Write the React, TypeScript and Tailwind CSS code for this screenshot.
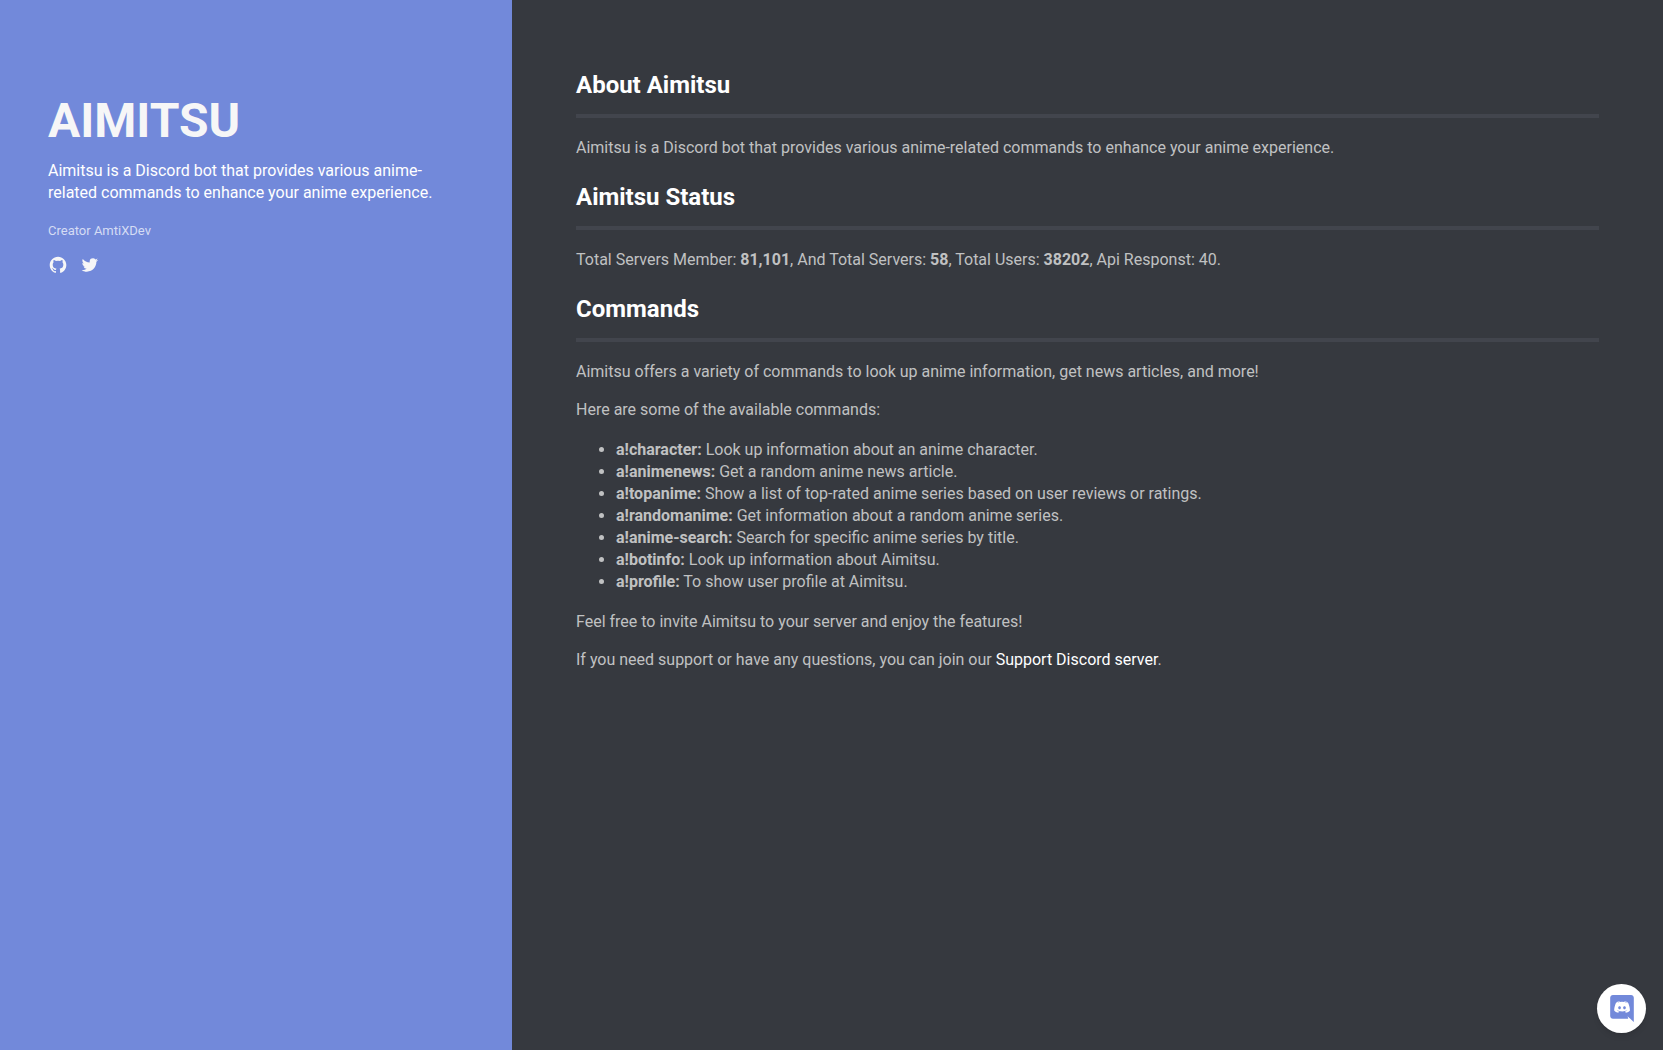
import React from "react";
import { BiLogoGithub, BiLogoTwitter } from "react-icons/bi";

const commands = [
  ["a!character:", "Look up information about an anime character."],
  ["a!animenews:", "Get a random anime news article."],
  ["a!topanime:", "Show a list of top-rated anime series based on user reviews or ratings."],
  ["a!randomanime:", "Get information about a random anime series."],
  ["a!anime-search:", "Search for specific anime series by title."],
  ["a!botinfo:", "Look up information about Aimitsu."],
  ["a!profile:", "To show user profile at Aimitsu."],
];

function Section({ title, children }: { title: string; children: React.ReactNode }) {
  return (
    <section>
      <h2 className="border-b-4 border-[#42454d] pb-[13px] text-2xl leading-8 font-bold text-white">{title}</h2>
      <div className="flex flex-col gap-4 pt-[19px] pb-[22px]">{children}</div>
    </section>
  );
}

export default function App() {
  return (
    <div className="flex min-h-screen bg-[#36393f] font-['Roboto',sans-serif] text-base leading-[22px] text-[#c0c1c2]">
      <aside className="w-[512px] shrink-0 bg-[#7289da] px-12 pt-[89px] text-[#f6f6f7]">
        <h1 className="text-5xl leading-[64px] font-bold">AIMITSU</h1>
        <p className="mt-[7px] leading-[22px] text-white">
          Aimitsu is a Discord bot that provides various anime-related commands to enhance your anime experience.
        </p>
        <p className="mt-4 text-[13px] text-[#d5dcf4]">Creator AmtiXDev</p>
        <nav className="mt-[13px] flex gap-3">
          <a href="#github" aria-label="GitHub">
            <BiLogoGithub className="size-5" />
          </a>
          <a href="#twitter" aria-label="Twitter">
            <BiLogoTwitter className="size-5" />
          </a>
        </nav>
      </aside>

      <main className="flex-1 px-16 pt-[69px]">
        <Section title="About Aimitsu">
          <p>Aimitsu is a Discord bot that provides various anime-related commands to enhance your anime experience.</p>
        </Section>
        <Section title="Aimitsu Status">
          <p>
            Total Servers Member: <strong>81,101</strong>, And Total Servers: <strong>58</strong>, Total Users:{" "}
            <strong>38202</strong>, Api Responst: 40.
          </p>
        </Section>
        <Section title="Commands">
          <p>Aimitsu offers a variety of commands to look up anime information, get news articles, and more!</p>
          <p>Here are some of the available commands:</p>
          <ul className="my-0.5 list-disc pl-10">
            {commands.map(([name, text]) => (
              <li key={name}>
                <strong>{name}</strong> {text}
              </li>
            ))}
          </ul>
          <p>Feel free to invite Aimitsu to your server and enjoy the features!</p>
          <p>
            If you need support or have any questions, you can join our{" "}
            <a href="#support" className="text-white">
              Support Discord server
            </a>
            .
          </p>
        </Section>
      </main>

      <button
        type="button"
        aria-label="Open Discord chat"
        className="fixed right-[17px] bottom-[17px] flex size-[49px] items-center justify-center rounded-full bg-white text-[#7289da] shadow-md"
      >
        <svg viewBox="0 0 448 512" className="h-[27px] w-6" fill="currentColor" aria-hidden="true">
          <path d="M297.216 243.2c0 15.616-11.52 28.416-26.112 28.416-14.336 0-26.112-12.8-26.112-28.416s11.52-28.416 26.112-28.416c14.592 0 26.112 12.8 26.112 28.416zm-119.552-28.416c-14.592 0-26.112 12.8-26.112 28.416s11.776 28.416 26.112 28.416c14.592 0 26.112-12.8 26.112-28.416.256-15.616-11.52-28.416-26.112-28.416zM448 52.736V512c-64.494-56.994-43.868-38.128-118.784-107.776l13.568 47.36H52.48C23.552 451.584 0 428.032 0 398.848V52.736C0 23.552 23.552 0 52.48 0h343.04C424.448 0 448 23.552 448 52.736zm-72.96 242.688c0-82.432-36.864-149.248-36.864-149.248-36.864-27.648-71.936-26.88-71.936-26.88l-3.584 4.096c43.52 13.312 63.744 32.512 63.744 32.512-60.811-33.329-132.244-33.335-191.232-7.424-9.472 4.352-15.104 7.424-15.104 7.424s21.248-20.224 67.328-33.536l-2.56-3.072s-35.072-.768-71.936 26.88c0 0-36.864 66.816-36.864 149.248 0 0 21.504 37.12 78.08 38.912 0 0 9.472-11.52 17.152-21.248-32.512-9.728-44.8-30.208-44.8-30.208 3.766 2.636 9.976 6.053 10.496 6.4 43.21 24.198 104.588 32.126 159.744 8.96 8.96-3.328 18.944-8.192 29.44-15.104 0 0-12.8 20.992-46.336 30.464 7.68 9.728 16.896 20.736 16.896 20.736 56.576-1.792 78.336-38.912 78.336-38.912z" />
        </svg>
      </button>
    </div>
  );
}
